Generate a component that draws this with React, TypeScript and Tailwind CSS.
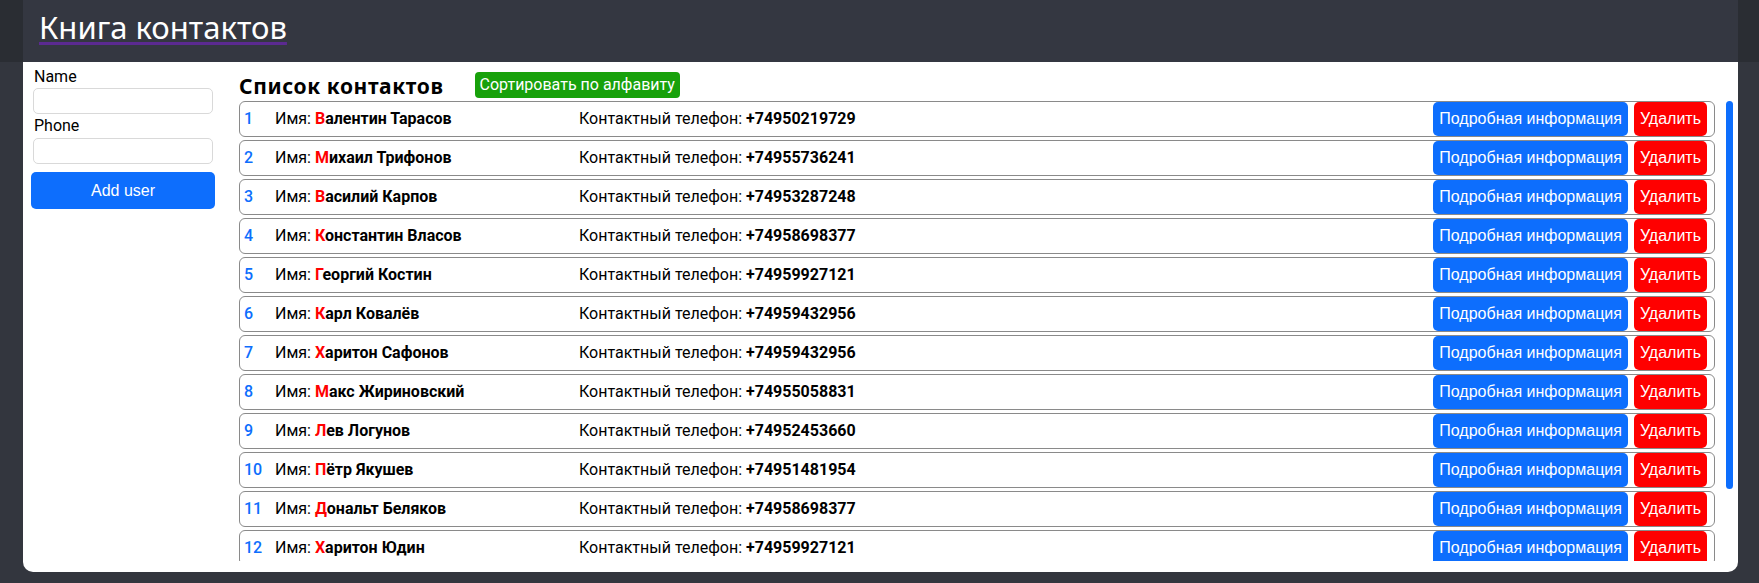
import React from 'react';

type Contact = { id: number; name: string; phone: string };

const contacts: Contact[] = [
    { id: 1, name: 'Валентин Тарасов', phone: '+74950219729' },
    { id: 2, name: 'Михаил Трифонов', phone: '+74955736241' },
    { id: 3, name: 'Василий Карпов', phone: '+74953287248' },
    { id: 4, name: 'Константин Власов', phone: '+74958698377' },
    { id: 5, name: 'Георгий Костин', phone: '+74959927121' },
    { id: 6, name: 'Карл Ковалёв', phone: '+74959432956' },
    { id: 7, name: 'Харитон Сафонов', phone: '+74959432956' },
    { id: 8, name: 'Макс Жириновский', phone: '+74955058831' },
    { id: 9, name: 'Лев Логунов', phone: '+74952453660' },
    { id: 10, name: 'Пётр Якушев', phone: '+74951481954' },
    { id: 11, name: 'Дональт Беляков', phone: '+74958698377' },
    { id: 12, name: 'Харитон Юдин', phone: '+74959927121' },
];

function ContactRow({ contact }: { contact: Contact }) {
    return (
        <div className="flex h-[36px] shrink-0 items-center rounded-[6px] border border-[#8a8a8a] pl-[4px] pr-[7px] text-[16px] text-black">
            <span className="w-[31px] font-medium text-[#0d6efd]">{contact.id}</span>
            <span className="w-[304px] whitespace-nowrap">
                Имя:{' '}
                <b className="font-bold">
                    <span className="text-[#ff0000]">{contact.name[0]}</span>
                    {contact.name.slice(1)}
                </b>
            </span>
            <span className="flex-1 whitespace-nowrap">
                Контактный телефон: <b className="font-bold">{contact.phone}</b>
            </span>
            <div className="flex h-[34px] gap-[6px] font-['Liberation_Sans',Arial,sans-serif] text-[16px] text-white">
                <button className="rounded-[5px] bg-[#0d6efd] px-[6px]">Подробная информация</button>
                <button className="rounded-[5px] bg-[#ff0000] px-[6px]">Удалить</button>
            </div>
        </div>
    );
}

export default function App() {
    return (
        <div className="min-h-[583px] bg-[#33363e] font-['Roboto',sans-serif]">
            <header className="h-[62px] bg-[#2a2d33]">
                <div className="ml-[23px] h-full w-[1715px] bg-[#343741] px-[16px] pt-[4px]">
                    <a className="font-['Noto_Sans',sans-serif] text-[31px] leading-normal text-white underline decoration-[#5b2a91] decoration-[3px] underline-offset-[3px]">
                        Книга контактов
                    </a>
                </div>
            </header>

            <main className="ml-[23px] flex h-[510px] w-[1715px] rounded-b-[10px] bg-white">
                <div className="ml-[8px] flex w-[184px] flex-col pt-[4px] text-[16px] text-black">
                    <label className="ml-[3px] h-[22px] leading-[22px]">Name</label>
                    <input className="mx-[2px] h-[26px] rounded-[5px] border border-[#d9d9d9]" />
                    <label className="ml-[3px] h-[24px] leading-[24px]">Phone</label>
                    <input className="mx-[2px] h-[26px] rounded-[5px] border border-[#d9d9d9]" />
                    <button className="mt-[8px] h-[37px] rounded-[5px] bg-[#0d6efd] font-['Liberation_Sans',Arial,sans-serif] text-[16px] text-white">
                        Add user
                    </button>
                </div>

                <div className="ml-[24px] flex flex-1 flex-col pr-[5px] pt-[10px]">
                    <div className="flex h-[26px] items-center">
                        <h2 className="pt-[2px] font-['Noto_Sans',sans-serif] text-[21px] font-bold leading-[26px] tracking-[0.6px] text-black">
                            Список контактов
                        </h2>
                        <button className="ml-[31px] h-[26px] rounded-[4px] bg-[#18a10b] px-[5px] text-[16px] text-white">
                            Сортировать по алфавиту
                        </button>
                    </div>
                    <div className="mt-[3px] flex h-[460px]">
                        <div className="flex flex-1 flex-col gap-[3px] overflow-hidden pr-[11px]">
                            {contacts.map((c) => (
                                <ContactRow key={c.id} contact={c} />
                            ))}
                        </div>
                        <div className="w-[7px]">
                            <div className="h-[388px] rounded-[4px] bg-[#0d6efd]" />
                        </div>
                    </div>
                </div>
            </main>
        </div>
    );
}
